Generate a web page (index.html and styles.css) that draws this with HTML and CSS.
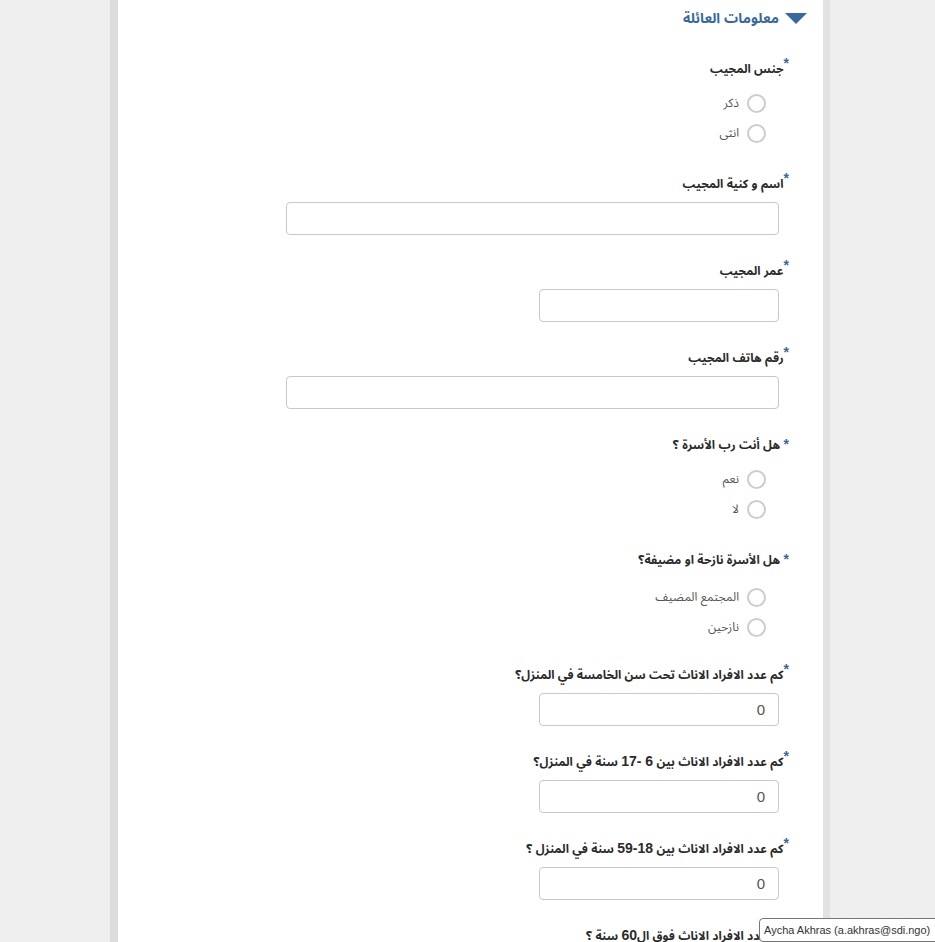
FILE: index.html
```html
<!DOCTYPE html>
<html lang="ar">
<head>
    <meta charset="UTF-8">
    <meta name="viewport" content="width=device-width, initial-scale=1.0">
    <title>معلومات العائلة</title>
    <link rel="stylesheet" href="styles.css">
</head>
<body>
    <div class="page">
        <div class="section">
            <h3 class="sectionTitle"><span class="arrow"></span>معلومات العائلة</h3>

            <div class="field">
                <label class="q"><span class="req">*</span>جنس المجيب</label>
                <div class="choices">
                    <div class="choice"><span class="circle"></span>ذكر</div>
                    <div class="choice"><span class="circle"></span>انثى</div>
                </div>
            </div>

            <div class="field">
                <label class="q"><span class="req">*</span>اسم و كنية المجيب</label>
                <input type="text" class="box wide">
            </div>

            <div class="field">
                <label class="q"><span class="req">*</span>عمر المجيب</label>
                <input type="text" class="box short">
            </div>

            <div class="field">
                <label class="q"><span class="req">*</span>رقم هاتف المجيب</label>
                <input type="text" class="box wide">
            </div>

            <div class="field">
                <label class="q"><span class="req mid">*</span> هل أنت رب الأسرة ؟</label>
                <div class="choices">
                    <div class="choice"><span class="circle"></span>نعم</div>
                    <div class="choice"><span class="circle"></span>لا</div>
                </div>
            </div>

            <div class="field tight">
                <label class="q"><span class="req mid">*</span> هل الأسرة نازحة او مضيفة؟</label>
                <div class="choices low">
                    <div class="choice"><span class="circle"></span>المجتمع المضيف</div>
                    <div class="choice"><span class="circle"></span>نازحين</div>
                </div>
            </div>

            <div class="field">
                <label class="q"><span class="req">*</span>كم عدد الافراد الاناث تحت سن الخامسة في المنزل؟</label>
                <input type="text" class="box short num" value="0">
            </div>

            <div class="field">
                <label class="q"><span class="req">*</span>كم عدد الافراد الاناث بين <b class="n">6 -17</b> سنة في المنزل؟</label>
                <input type="text" class="box short num" value="0">
            </div>

            <div class="field">
                <label class="q"><span class="req">*</span>كم عدد الافراد الاناث بين <b class="n">18-59</b> سنة في المنزل ؟</label>
                <input type="text" class="box short num" value="0">
            </div>

            <div class="field">
                <label class="q"><span class="req">*</span>كم عدد الافراد الاناث فوق ال<b class="n">60</b> سنة ؟</label>
                <input type="text" class="box short num" value="0">
            </div>
        </div>
    </div>
    <div class="tip">Aycha Akhras (a.akhras@sdi.ngo)</div>
</body>
</html>
```

FILE: styles.css
```css
body{
    margin: 0;
    background-color: #efefef;
    font-family: "Liberation Sans", "Noto Sans Arabic", "DejaVu Sans", sans-serif;
    overflow: hidden;
}
.page{
    margin-left: 110px;
    width: 705px;
    min-height: 1100px;
    background-color: #fff;
    border-left: 8px solid #dcdcdc;
    border-right: 7px solid #e2e2e2;
    direction: rtl;
}
.section{
    padding-top: 8px;
    padding-right: 16px;
}
.sectionTitle{
    margin: 0;
    height: 20px;
    line-height: 20px;
    font-size: 14px;
    font-weight: bold;
    color: #3669a0;
    display: flex;
    align-items: center;
}
.arrow{
    width: 0;
    height: 0;
    border-left: 11px solid transparent;
    border-right: 11px solid transparent;
    border-top: 11px solid #3669a0;
    margin-left: 6px;
}
.field{
    padding-right: 18px;
    margin-top: 30px;
    margin-bottom: -5px;
}
.field.tight{
    margin-bottom: -8px;
}
.q{
    display: block;
    height: 20px;
    line-height: 20px;
    font-size: 12px;
    font-weight: bold;
    color: #2b2b2b;
    white-space: nowrap;
}
.n{
    font-size: 14px;
}
.req{
    color: #3669a0;
    font-family: "Liberation Sans", sans-serif;
    font-size: 14px;
    position: relative;
    top: -5px;
}
.req.mid{
    top: 0;
}
.choices{
    margin-top: 11px;
    margin-right: 23px;
}
.choices.low{
    margin-top: 14px;
}
.choice{
    height: 29.5px;
    display: flex;
    align-items: center;
    font-size: 12px;
    color: #555;
}
.circle{
    width: 15px;
    height: 15px;
    border: 2px solid #cdcdcd;
    border-radius: 50%;
    margin-left: 8px;
}
.box{
    display: block;
    margin-top: 9px;
    margin-right: 10px;
    height: 33px;
    box-sizing: border-box;
    border: 1px solid #c8c8c8;
    border-radius: 4px;
    background-color: #fff;
    font-family: "Liberation Sans", sans-serif;
    font-size: 15px;
    color: #555;
    padding: 0 13px;
    outline: none;
}
.wide{
    width: 493px;
}
.short{
    width: 240px;
}
.num{
    direction: ltr;
    text-align: right;
}
.tip{
    position: fixed;
    left: 759px;
    top: 918px;
    width: 190px;
    height: 24px;
    box-sizing: border-box;
    border: 1px solid #767676;
    border-radius: 4px;
    background-color: #fff;
    font-family: "Liberation Sans", sans-serif;
    font-size: 11px;
    line-height: 22px;
    padding-left: 4px;
    color: #333;
    white-space: nowrap;
}
```
